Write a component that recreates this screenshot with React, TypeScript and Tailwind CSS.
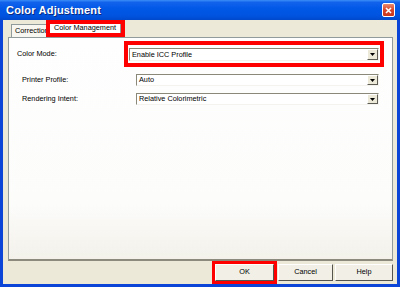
import React from 'react';

const font = { fontFamily: '"Liberation Sans", Arial, sans-serif' };

const Combo = ({ value, className }: { value: string; className?: string }) => (
  <div className={`flex items-center bg-white border border-t-[#8a8878] border-l-[#8a8878] border-r-[#f4f3ee] border-b-[#f4f3ee] ${className ?? ''}`}>
    <span className="flex-1 pl-[2px] text-[7.3px] text-black leading-none truncate">{value}</span>
    <div className="w-[11px] h-full flex items-center justify-center bg-[#ece9d8] border-l border-t border-l-white border-t-white border-r border-b border-r-[#5c5b54] border-b-[#5c5b54]">
      <svg width="5" height="3" viewBox="0 0 5 3"><path d="M0 0h5L2.5 3z" fill="#000" /></svg>
    </div>
  </div>
);

const Btn = ({ label, className }: { label: string; className?: string }) => (
  <div className={`h-[17px] flex items-center justify-center bg-[#f1efe6] border border-t-white border-l-white border-r-[#55544d] border-b-[#55544d] text-[7.3px] text-black ${className ?? ''}`}>
    {label}
  </div>
);

export default function App() {
  return (
    <div className="w-[400px] h-[287px] flex flex-col bg-[#0b45d8]" style={font}>
      {/* title bar */}
      <div className="h-[20px] flex items-center justify-between pl-[6px] pr-[5px] bg-[linear-gradient(#3b8cf7_0%,#1262ec_12%,#0058e6_45%,#0053df_80%,#0049cc_100%)]">
        <span className="text-white font-bold text-[11px] tracking-[0.2px] [text-shadow:1px_1px_0_#0a2a80]">Color Adjustment</span>
        <div className="w-[13px] h-[14px] rounded-[2px] border border-white bg-[linear-gradient(#e88a6e,#d8442a_50%,#c9381c)] flex items-center justify-center">
          <svg width="7" height="7" viewBox="0 0 7 7"><path d="M1 1l5 5M6 1L1 6" stroke="#fff" strokeWidth="1.6" /></svg>
        </div>
      </div>

      {/* body */}
      <div className="flex-1 flex flex-col mx-[3px] mb-[3px] bg-[#ece9d8] pl-[5px] pr-[4px]">
        {/* tabs */}
        <div className="h-[17px] flex items-end pl-[3px]">
          <div className="h-[13px] w-[39px] flex items-center pl-[3px] bg-[#f7f6f0] border border-b-0 border-[#919b9c] text-[7.3px] text-black whitespace-nowrap">
            Correction
          </div>
          <div className="relative z-10 -ml-[4px] h-[17px] border-4 border-[#ff0000] flex">
            <div className="flex-1 flex items-center px-[4px] bg-white border-r border-[#919b9c] text-[7.3px] text-black whitespace-nowrap">
              Color Management
            </div>
          </div>
        </div>

        {/* panel */}
        <div className="h-[224px] flex flex-col border border-[#919b9c] border-b-2 border-b-[#8c8a7c] bg-[linear-gradient(#fefefe_0%,#fcfcfb_75%,#f3f1ea_100%)] pl-[8px] pr-[13px]">
          <div className="mt-[3px] flex items-center">
            <span className="w-[107px] text-[7.3px] text-black">Color Mode:</span>
            <div className="flex-1 border-4 border-[#ff0000] pt-[3px] pb-[2px] pl-[1px] pr-[1px] -mr-[5px]">
              <Combo value="Enable ICC Profile" className="h-[13px]" />
            </div>
          </div>
          <div className="mt-[7px] flex items-center pl-[5px]">
            <span className="w-[114px] text-[7.3px] text-black">Printer Profile:</span>
            <Combo value="Auto" className="flex-1 h-[12px]" />
          </div>
          <div className="mt-[7px] flex items-center pl-[5px]">
            <span className="w-[114px] text-[7.3px] text-black">Rendering Intent:</span>
            <Combo value="Relative Colorimetric" className="flex-1 h-[12px]" />
          </div>
        </div>

        {/* buttons */}
        <div className="flex-1 flex items-center justify-end">
          <div className="border-[3px] border-[#ff0000]">
            <Btn label="OK" className="w-[59px] border-r-[#1e1e1e] border-b-[#1e1e1e]" />
          </div>
          <Btn label="Cancel" className="ml-[1px] w-[55px]" />
          <Btn label="Help" className="ml-[2px] w-[58px]" />
        </div>
      </div>
    </div>
  );
}
